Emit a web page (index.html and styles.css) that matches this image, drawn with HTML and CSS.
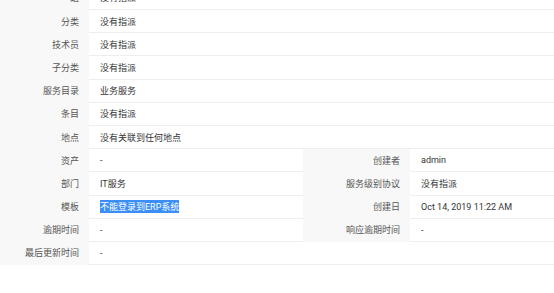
FILE: index.html
```html
<!DOCTYPE html>
<html lang="zh-CN">
<head>
<meta charset="utf-8">
<title>详情</title>
<link rel="stylesheet" href="styles.css">
</head>
<body>
<div class="details">
  <div class="lbl">组</div><div class="val span3">没有指派</div>
  <div class="lbl">分类</div><div class="val span3">没有指派</div>
  <div class="lbl">技术员</div><div class="val span3">没有指派</div>
  <div class="lbl">子分类</div><div class="val span3">没有指派</div>
  <div class="lbl">服务目录</div><div class="val span3">业务服务</div>
  <div class="lbl">条目</div><div class="val span3">没有指派</div>
  <div class="lbl">地点</div><div class="val span3">没有关联到任何地点</div>

  <div class="lbl">资产</div><div class="val">-</div>
  <div class="lbl">创建者</div><div class="val">admin</div>

  <div class="lbl">部门</div><div class="val">IT服务</div>
  <div class="lbl">服务级别协议</div><div class="val">没有指派</div>

  <div class="lbl">模板</div><div class="val"><span class="sel">不能登录到ERP系统</span></div>
  <div class="lbl">创建日</div><div class="val">Oct 14, 2019 11:22 AM</div>

  <div class="lbl">逾期时间</div><div class="val">-</div>
  <div class="lbl">响应逾期时间</div><div class="val">-</div>

  <div class="lbl">最后更新时间</div><div class="val span3">-</div>
</div>
</body>
</html>
```

FILE: styles.css
```css
html, body {
  margin: 0;
  padding: 0;
  background: #ffffff;
}

body {
  width: 554px;
  height: 293px;
  overflow: hidden;
  font-family: Roboto, "Noto Sans CJK SC", sans-serif;
  font-size: 9px;
}

.details {
  margin-top: -13.2px;
  display: grid;
  grid-template-columns: 89px 214px 107px 1fr;
  grid-auto-rows: 23.2px;
}

.lbl,
.val {
  box-sizing: border-box;
  display: flex;
  align-items: center;
  border-bottom: 1px solid #eeeeee;
  white-space: nowrap;
}

.lbl {
  justify-content: flex-end;
  padding-right: 10px;
  background: #f8f8f8;
  border-bottom-color: #f8f8f8;
  color: #555555;
  font-family: "Noto Sans CJK SC", sans-serif;
}

.val {
  padding-left: 11px;
  color: #333333;
}

.span3 {
  grid-column: span 3;
}

.sel {
  background: #3a8ef6;
  color: #ffffff;
}
```
